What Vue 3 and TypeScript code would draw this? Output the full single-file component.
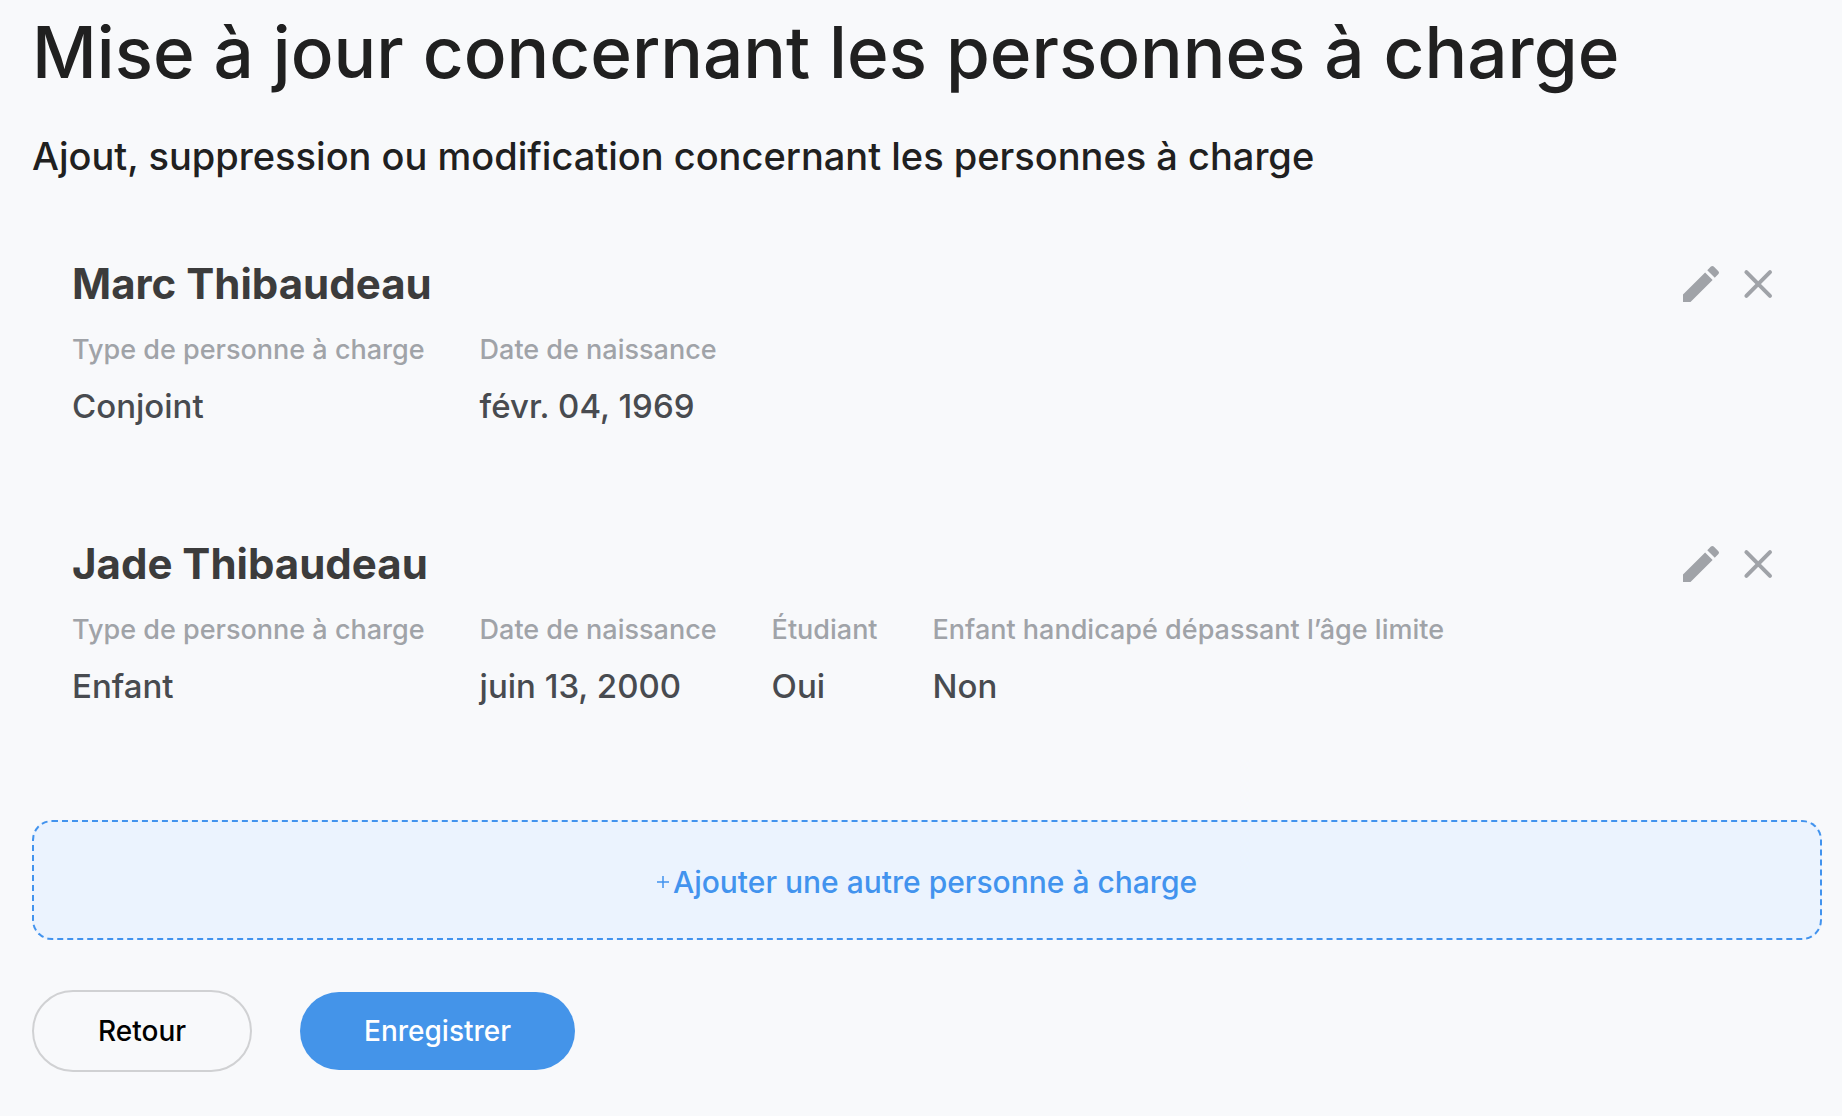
<script setup lang="ts">
interface Field {
  label: string
  value: string
}

interface Dependant {
  name: string
  fields: Field[]
}

const dependants: Dependant[] = [
  {
    name: 'Marc Thibaudeau',
    fields: [
      { label: 'Type de personne à charge', value: 'Conjoint' },
      { label: 'Date de naissance', value: 'févr. 04, 1969' },
    ],
  },
  {
    name: 'Jade Thibaudeau',
    fields: [
      { label: 'Type de personne à charge', value: 'Enfant' },
      { label: 'Date de naissance', value: 'juin 13, 2000' },
      { label: 'Étudiant', value: 'Oui' },
      { label: 'Enfant handicapé dépassant l’âge limite', value: 'Non' },
    ],
  },
]
</script>

<template>
  <main class="page">
    <h1 class="title">Mise à jour concernant les personnes à charge</h1>
    <h2 class="subtitle">Ajout, suppression ou modification concernant les personnes à charge</h2>

    <article v-for="person in dependants" :key="person.name" class="card">
      <header class="card-head">
        <h3 class="name">{{ person.name }}</h3>
        <div class="actions">
          <button type="button" class="icon-button" :aria-label="`Modifier ${person.name}`">
            <svg viewBox="0 0 24 24" width="48" height="48" fill="currentColor" aria-hidden="true">
              <path d="M3 17.25V21h3.75L17.81 9.94l-3.75-3.75L3 17.25zM20.71 7.04a1 1 0 0 0 0-1.41l-2.34-2.34a1 1 0 0 0-1.41 0l-1.83 1.83 3.75 3.75 1.83-1.83z" />
            </svg>
          </button>
          <button type="button" class="icon-button" :aria-label="`Supprimer ${person.name}`">
            <svg viewBox="0 0 48 48" width="48" height="48" fill="none" stroke="currentColor" stroke-width="4" stroke-linecap="round" aria-hidden="true">
              <path d="M12.4 12.2l23.6 23.6M36 12.2l-23.6 23.6" />
            </svg>
          </button>
        </div>
      </header>
      <dl class="fields">
        <div v-for="field in person.fields" :key="field.label" class="field">
          <dt class="label">{{ field.label }}</dt>
          <dd class="value">{{ field.value }}</dd>
        </div>
      </dl>
    </article>

    <button type="button" class="add">
      <svg class="plus" viewBox="0 0 12 12" width="12" height="12" fill="none" stroke="currentColor" stroke-width="1.5" aria-hidden="true">
        <path d="M6 0v12M0 6h12" />
      </svg>
      <span>Ajouter une autre personne à charge</span>
    </button>

    <footer class="footer">
      <button type="button" class="pill back">Retour</button>
      <button type="button" class="pill save">Enregistrer</button>
    </footer>
  </main>
</template>

<style>
body {
  background: #f8f9fb;
}
</style>

<style scoped>
.page {
  padding: 12px 20px 44px 32px;
  font-family: Inter, sans-serif;
  font-weight: 500;
  color: #202020;
}

button {
  margin: 0;
  font: inherit;
  cursor: pointer;
}

.title {
  margin: 0 0 40px;
  font-size: 71px;
  line-height: 80px;
  font-weight: 500;
}

.subtitle {
  margin: 0;
  font-size: 38px;
  line-height: 48px;
  font-weight: 500;
}

.card {
  padding: 80px 40px 34px;
}

.card-head {
  display: flex;
  justify-content: space-between;
  align-items: center;
  margin-bottom: 24px;
}

.name {
  margin: 0;
  font-size: 42px;
  line-height: 48px;
  font-weight: 700;
  color: #3c3c3c;
}

.actions {
  display: flex;
  gap: 9px;
}

.icon-button {
  display: flex;
  padding: 0;
  border: 0;
  background: none;
  color: #a0a3a8;
}

.fields {
  display: flex;
  flex-wrap: wrap;
  gap: 55px;
  margin: 0;
}

.label {
  margin-bottom: 18px;
  font-size: 27px;
  line-height: 36px;
  color: #a0a3a8;
}

.value {
  margin: 0;
  font-size: 33px;
  line-height: 40px;
  color: #484b50;
}

.add {
  display: flex;
  justify-content: center;
  align-items: center;
  gap: 4px;
  width: 100%;
  height: 120px;
  margin-top: 80px;
  padding: 4px 0 0;
  border: 2px dashed #4293ee;
  border-radius: 20px;
  background: #ebf3fe;
  color: #4293ee;
  font-size: 30px;
}

.footer {
  display: flex;
  align-items: center;
  gap: 48px;
  margin-top: 50px;
}

.pill {
  padding: 0 64px;
  border: 2px solid #d0d1d3;
  border-radius: 41px;
  background: transparent;
  color: #000;
  font-size: 28px;
  line-height: 78px;
}

.save {
  border: 0;
  background: #4494e9;
  color: #fff;
}
</style>
